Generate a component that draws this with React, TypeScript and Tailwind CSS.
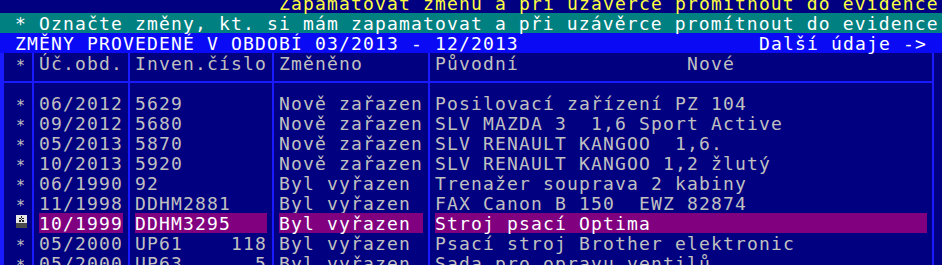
type Row = {
  obd: string;
  inv: string;
  zm: string;
  puv: string;
  sel?: boolean;
};

const rows: Row[] = [
  { obd: "06/2012", inv: "5629", zm: "Nově zařazen", puv: "Posilovací zařízení PZ 104" },
  { obd: "09/2012", inv: "5680", zm: "Nově zařazen", puv: "SLV MAZDA 3  1,6 Sport Active" },
  { obd: "05/2013", inv: "5870", zm: "Nově zařazen", puv: "SLV RENAULT KANGOO  1,6." },
  { obd: "10/2013", inv: "5920", zm: "Nově zařazen", puv: "SLV RENAULT KANGOO 1,2 žlutý" },
  { obd: "06/1990", inv: "92", zm: "Byl vyřazen", puv: "Trenažer souprava 2 kabiny" },
  { obd: "11/1998", inv: "DDHM2881", zm: "Byl vyřazen", puv: "FAX Canon B 150  EWZ 82874" },
  { obd: "10/1999", inv: "DDHM3295", zm: "Byl vyřazen", puv: "Stroj psací Optima", sel: true },
  { obd: "05/2000", inv: "UP61    118", zm: "Byl vyřazen", puv: "Psací stroj Brother elektronic" },
  { obd: "05/2000", inv: "UP63      5", zm: "Byl vyřazen", puv: "Sada pro opravu ventilů" },
];

function Sep() {
  return (
    <div className="flex h-[20px] w-[12px] shrink-0 justify-center">
      <div className="h-full w-[2px] bg-[#1a1aff]" />
    </div>
  );
}

function Cross({ end = false }: { end?: boolean }) {
  return (
    <div className="flex h-[20px] w-[12px] shrink-0 flex-col items-center">
      <div className="h-[8px] w-[2px] bg-[#1a1aff]" />
      <div className={`h-[2px] bg-[#1a1aff] ${end ? "w-[7px] self-start" : "w-full"}`} />
      <div className="w-[2px] flex-1 bg-[#1a1aff]" />
    </div>
  );
}

function HLine({ w }: { w: string }) {
  return (
    <div className={`flex h-[20px] shrink-0 flex-col ${w}`}>
      <div className="h-[8px]" />
      <div className="h-[2px] w-full bg-[#1a1aff]" />
    </div>
  );
}

function Cursor() {
  return (
    <svg width="12" height="20" viewBox="0 0 12 20">
      <rect x="1" y="2" width="11" height="8" fill="#e6e6e6" />
      <rect x="1" y="10" width="11" height="5" fill="#4a4a4a" />
      <rect x="6" y="3" width="1" height="2" fill="#222" />
      <rect x="4" y="5" width="2" height="1" fill="#222" />
      <rect x="7" y="5" width="2" height="1" fill="#222" />
      <rect x="6" y="6" width="1" height="1" fill="#222" />
      <rect x="4" y="7" width="2" height="2" fill="#222" />
      <rect x="7" y="7" width="2" height="2" fill="#222" />
    </svg>
  );
}

function Star() {
  return <div className="w-[12px] shrink-0 pt-[2px] pl-[1px] text-[15px]">*</div>;
}

function TableRow({ r }: { r: Row }) {
  const cell = r.sel ? "bg-[#800080] text-white" : "";
  return (
    <div className="flex h-[20px]">
      <div className="w-[11px] shrink-0" />
      {r.sel ? (
        <div className="w-[12px] shrink-0">
          <Cursor />
        </div>
      ) : (
        <Star />
      )}
      <Sep />
      <div className={`h-[20px] w-[84px] shrink-0 ${cell}`}>{r.obd}</div>
      <Sep />
      <div className={`h-[20px] w-[132px] shrink-0 ${cell}`}>{r.inv}</div>
      <Sep />
      <div className={`h-[20px] w-[144px] shrink-0 ${cell}`}>{r.zm}</div>
      <Sep />
      <div className={`h-[20px] w-[492px] shrink-0 ${cell}`}>{r.puv}</div>
      <Sep />
    </div>
  );
}

export default function App() {
  return (
    <div className="h-[265px] w-[942px] overflow-hidden whitespace-pre bg-[#000080] font-['DejaVu_Sans_Mono',monospace] text-[18px] leading-[22px] tracking-[1.16px] text-[#c0c0c0]">
      <div className="-mt-[7px]">
        <div className="h-[20px] pl-[279px] text-[#ffff40]">
          Zapamatovat změnu a při uzávěrce promítnout do evidence
        </div>
        <div className="h-[20px] bg-[#008080] pl-[15px] text-white">
          * Označte změny, kt. si mám zapamatovat a při uzávěrce promítnout do evidence
        </div>
        <div className="flex h-[20px] bg-[#0a0af5] pl-[15px] text-white">
          <span className="w-[744px] shrink-0">ZMĚNY PROVEDENÉ V OBDOBÍ 03/2013 - 12/2013</span>
          <span>Další údaje -&gt;</span>
        </div>
        <div className="border-l-[4px] border-[#1a1aff]">
          <div className="flex h-[20px]">
            <div className="w-[11px] shrink-0" />
            <Star />
            <Sep />
            <div className="w-[84px] shrink-0">Úč.obd.</div>
            <Sep />
            <div className="w-[132px] shrink-0">Inven.číslo</div>
            <Sep />
            <div className="w-[144px] shrink-0">Změněno</div>
            <Sep />
            <div className="w-[492px] shrink-0">Původní              Nové</div>
            <Sep />
          </div>
          <div className="flex h-[20px]">
            <HLine w="w-[23px]" />
            <Cross />
            <HLine w="w-[84px]" />
            <Cross />
            <HLine w="w-[132px]" />
            <Cross />
            <HLine w="w-[144px]" />
            <Cross />
            <HLine w="w-[492px]" />
            <Cross end />
          </div>
          {rows.map((r, i) => (
            <TableRow key={i} r={r} />
          ))}
        </div>
      </div>
    </div>
  );
}
